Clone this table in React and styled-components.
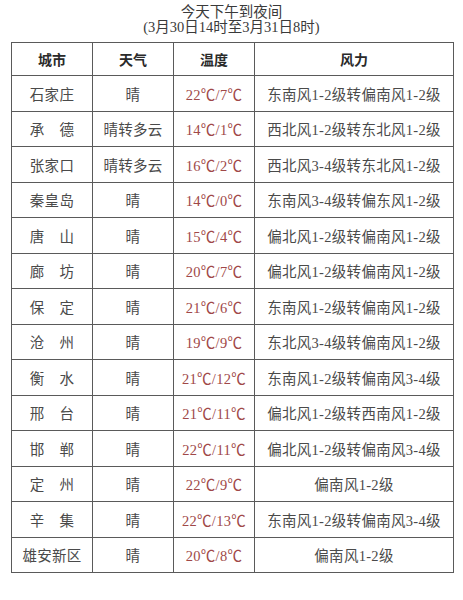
import React from 'react'
import styled, { createGlobalStyle } from 'styled-components'

const GlobalStyle = createGlobalStyle`
  html, body {
    margin: 0;
    padding: 0;
    background: #ffffff;
  }
  body {
    font-family: "Liberation Serif", "Noto Sans CJK SC", serif;
  }
`

const rows = [
  ['石家庄', '晴', '22℃/7℃', '东南风1-2级转偏南风1-2级'],
  ['承　德', '晴转多云', '14℃/1℃', '西北风1-2级转东北风1-2级'],
  ['张家口', '晴转多云', '16℃/2℃', '西北风3-4级转东北风1-2级'],
  ['秦皇岛', '晴', '14℃/0℃', '东南风3-4级转偏东风1-2级'],
  ['唐　山', '晴', '15℃/4℃', '偏北风1-2级转偏南风1-2级'],
  ['廊　坊', '晴', '20℃/7℃', '偏北风1-2级转偏南风1-2级'],
  ['保　定', '晴', '21℃/6℃', '东南风1-2级转偏南风1-2级'],
  ['沧　州', '晴', '19℃/9℃', '东北风3-4级转偏南风1-2级'],
  ['衡　水', '晴', '21℃/12℃', '东南风1-2级转偏南风3-4级'],
  ['邢　台', '晴', '21℃/11℃', '偏北风1-2级转西南风1-2级'],
  ['邯　郸', '晴', '22℃/11℃', '偏北风1-2级转偏南风3-4级'],
  ['定　州', '晴', '22℃/9℃', '偏南风1-2级'],
  ['辛　集', '晴', '22℃/13℃', '东南风1-2级转偏南风3-4级'],
  ['雄安新区', '晴', '20℃/8℃', '偏南风1-2级'],
]

const Page = styled.div`
  width: 463px;
  height: 600px;
  padding-top: 5px;
  box-sizing: border-box;
  background: #ffffff;
`

const Title = styled.div`
  text-align: center;
  color: #3a3a3a;
  font-size: 14.5px;
  line-height: 15px;
`

const Table = styled.table`
  margin: 7px 0 0 11px;
  width: 443px;
  border-collapse: collapse;
  table-layout: fixed;
  border: 1.5px solid #5a5a5a;
`

const HeadCell = styled.th`
  height: 32px;
  padding: 0;
  border: 1px solid #5a5a5a;
  font-size: 14px;
  font-weight: bold;
  color: #2a2a2a;
  text-align: center;
`

const Cell = styled.td`
  height: 34.5px;
  padding: 0;
  border: 1px solid #5a5a5a;
  font-size: 14.5px;
  letter-spacing: 0.3px;
  color: ${(p) => (p.$temp ? '#a04848' : '#4a4a4a')};
  text-align: center;
  white-space: nowrap;
`

const App = () => (
  <Page>
    <GlobalStyle />
    <Title>今天下午到夜间</Title>
    <Title>(3月30日14时至3月31日8时)</Title>
    <Table>
      <colgroup>
        <col style={{ width: '81px' }} />
        <col style={{ width: '81px' }} />
        <col style={{ width: '81px' }} />
        <col />
      </colgroup>
      <thead>
        <tr>
          <HeadCell>城市</HeadCell>
          <HeadCell>天气</HeadCell>
          <HeadCell>温度</HeadCell>
          <HeadCell>风力</HeadCell>
        </tr>
      </thead>
      <tbody>
        {rows.map((r) => (
          <tr key={r[0]}>
            <Cell>{r[0]}</Cell>
            <Cell>{r[1]}</Cell>
            <Cell $temp>{r[2]}</Cell>
            <Cell>{r[3]}</Cell>
          </tr>
        ))}
      </tbody>
    </Table>
  </Page>
)

export default App
